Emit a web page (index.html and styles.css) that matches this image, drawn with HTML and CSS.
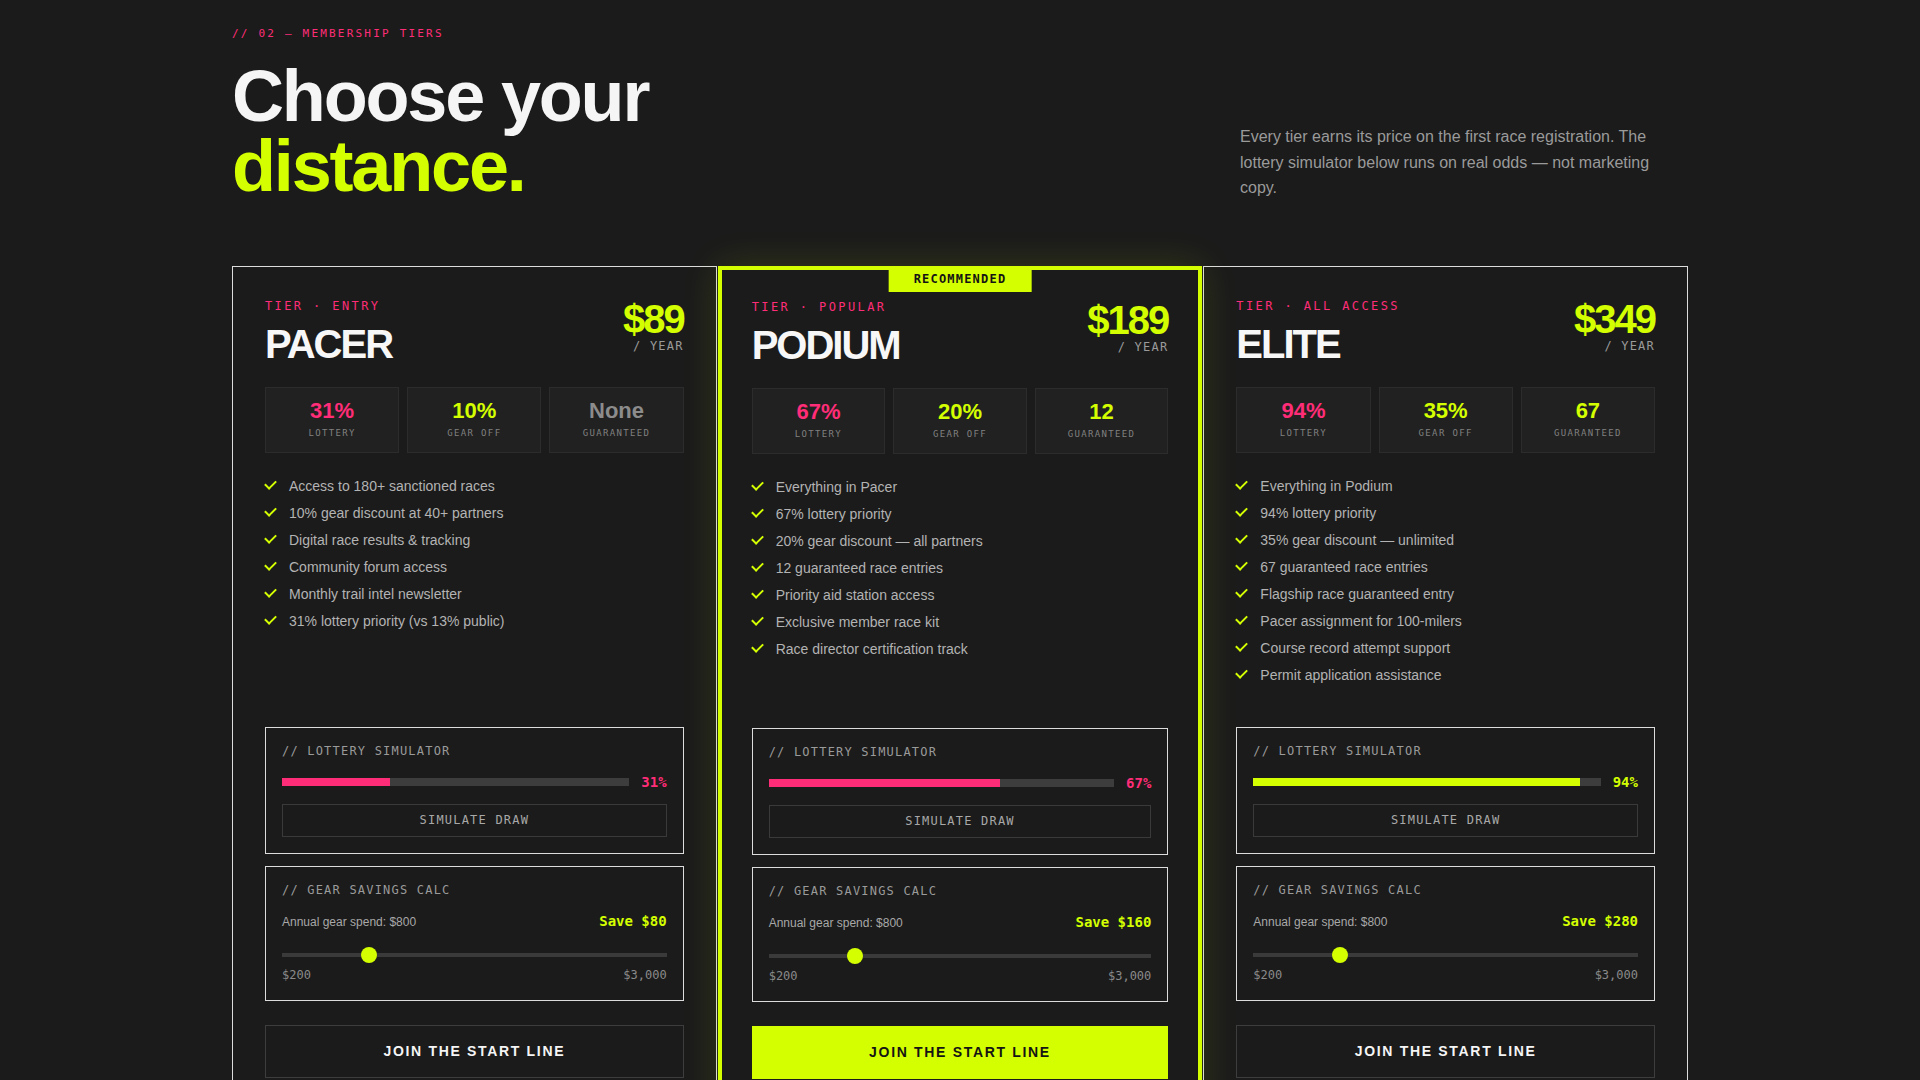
FILE: index.html
```html
<!DOCTYPE html>
<html lang="en">
<head>
    <meta charset="UTF-8">
    <meta name="viewport" content="width=device-width, initial-scale=1.0">
    <title>Membership Tiers</title>
    <link rel="stylesheet" href="styles.css">
</head>
<body>
    <section class="tiers-section">
        <header class="section-head">
            <div>
                <p class="eyebrow">// 02 — MEMBERSHIP TIERS</p>
                <h2 class="section-title">Choose your<br><span class="accent">distance.</span></h2>
            </div>
            <p class="section-lede">Every tier earns its price on the first race registration. The lottery simulator below runs on real odds — not marketing copy.</p>
        </header>

        <div class="tiers">
            <!-- Pacer -->
            <article class="tier">
                <div class="tier-head">
                    <div>
                        <p class="tier-kicker">TIER · ENTRY</p>
                        <h3 class="tier-name">PACER</h3>
                    </div>
                    <div class="price">
                        <span class="price-amount">$89</span>
                        <span class="price-period">/ YEAR</span>
                    </div>
                </div>
                <div class="stats">
                    <div class="stat"><span class="stat-value pink">31%</span><span class="stat-label">LOTTERY</span></div>
                    <div class="stat"><span class="stat-value lime">10%</span><span class="stat-label">GEAR OFF</span></div>
                    <div class="stat"><span class="stat-value muted">None</span><span class="stat-label">GUARANTEED</span></div>
                </div>
                <ul class="features">
                    <li>Access to 180+ sanctioned races</li>
                    <li>10% gear discount at 40+ partners</li>
                    <li>Digital race results &amp; tracking</li>
                    <li>Community forum access</li>
                    <li>Monthly trail intel newsletter</li>
                    <li>31% lottery priority (vs 13% public)</li>
                </ul>
                <div class="widget">
                    <p class="widget-title">// LOTTERY SIMULATOR</p>
                    <div class="meter">
                        <div class="meter-track"><div class="meter-fill" style="width: 31%"></div></div>
                        <span class="meter-value">31%</span>
                    </div>
                    <button class="simulate" type="button">SIMULATE DRAW</button>
                </div>
                <div class="widget">
                    <p class="widget-title">// GEAR SAVINGS CALC</p>
                    <div class="calc-row">
                        <span class="calc-spend">Annual gear spend: $800</span>
                        <span class="calc-save">Save $80</span>
                    </div>
                    <input class="range" type="range" min="200" max="3000" step="50" value="800">
                    <div class="range-labels"><span>$200</span><span>$3,000</span></div>
                </div>
                <button class="join" type="button">JOIN THE START LINE</button>
            </article>

            <!-- Podium -->
            <article class="tier tier--featured">
                <span class="badge">RECOMMENDED</span>
                <div class="tier-head">
                    <div>
                        <p class="tier-kicker">TIER · POPULAR</p>
                        <h3 class="tier-name">PODIUM</h3>
                    </div>
                    <div class="price">
                        <span class="price-amount">$189</span>
                        <span class="price-period">/ YEAR</span>
                    </div>
                </div>
                <div class="stats">
                    <div class="stat"><span class="stat-value pink">67%</span><span class="stat-label">LOTTERY</span></div>
                    <div class="stat"><span class="stat-value lime">20%</span><span class="stat-label">GEAR OFF</span></div>
                    <div class="stat"><span class="stat-value lime">12</span><span class="stat-label">GUARANTEED</span></div>
                </div>
                <ul class="features">
                    <li>Everything in Pacer</li>
                    <li>67% lottery priority</li>
                    <li>20% gear discount — all partners</li>
                    <li>12 guaranteed race entries</li>
                    <li>Priority aid station access</li>
                    <li>Exclusive member race kit</li>
                    <li>Race director certification track</li>
                </ul>
                <div class="widget">
                    <p class="widget-title">// LOTTERY SIMULATOR</p>
                    <div class="meter">
                        <div class="meter-track"><div class="meter-fill" style="width: 67%"></div></div>
                        <span class="meter-value">67%</span>
                    </div>
                    <button class="simulate" type="button">SIMULATE DRAW</button>
                </div>
                <div class="widget">
                    <p class="widget-title">// GEAR SAVINGS CALC</p>
                    <div class="calc-row">
                        <span class="calc-spend">Annual gear spend: $800</span>
                        <span class="calc-save">Save $160</span>
                    </div>
                    <input class="range" type="range" min="200" max="3000" step="50" value="800">
                    <div class="range-labels"><span>$200</span><span>$3,000</span></div>
                </div>
                <button class="join" type="button">JOIN THE START LINE</button>
            </article>

            <!-- Elite -->
            <article class="tier">
                <div class="tier-head">
                    <div>
                        <p class="tier-kicker">TIER · ALL ACCESS</p>
                        <h3 class="tier-name">ELITE</h3>
                    </div>
                    <div class="price">
                        <span class="price-amount">$349</span>
                        <span class="price-period">/ YEAR</span>
                    </div>
                </div>
                <div class="stats">
                    <div class="stat"><span class="stat-value pink">94%</span><span class="stat-label">LOTTERY</span></div>
                    <div class="stat"><span class="stat-value lime">35%</span><span class="stat-label">GEAR OFF</span></div>
                    <div class="stat"><span class="stat-value lime">67</span><span class="stat-label">GUARANTEED</span></div>
                </div>
                <ul class="features">
                    <li>Everything in Podium</li>
                    <li>94% lottery priority</li>
                    <li>35% gear discount — unlimited</li>
                    <li>67 guaranteed race entries</li>
                    <li>Flagship race guaranteed entry</li>
                    <li>Pacer assignment for 100-milers</li>
                    <li>Course record attempt support</li>
                    <li>Permit application assistance</li>
                </ul>
                <div class="widget">
                    <p class="widget-title">// LOTTERY SIMULATOR</p>
                    <div class="meter meter--high">
                        <div class="meter-track"><div class="meter-fill" style="width: 94%"></div></div>
                        <span class="meter-value">94%</span>
                    </div>
                    <button class="simulate" type="button">SIMULATE DRAW</button>
                </div>
                <div class="widget">
                    <p class="widget-title">// GEAR SAVINGS CALC</p>
                    <div class="calc-row">
                        <span class="calc-spend">Annual gear spend: $800</span>
                        <span class="calc-save">Save $280</span>
                    </div>
                    <input class="range" type="range" min="200" max="3000" step="50" value="800">
                    <div class="range-labels"><span>$200</span><span>$3,000</span></div>
                </div>
                <button class="join" type="button">JOIN THE START LINE</button>
            </article>
        </div>
    </section>
</body>
</html>
```

FILE: styles.css
```css
:root {
    --bg: #1b1b1b;
    --lime: #d4ff00;
    --pink: #ff2d78;
    --line: #dcdcdc;
    --mono: "DejaVu Sans Mono", "Liberation Mono", monospace;
}
* {
    box-sizing: border-box;
}
body {
    margin: 0;
    background: var(--bg);
    color: #f5f5f5;
    font-family: "Liberation Sans", Arial, sans-serif;
}

/* header */
.tiers-section {
    max-width: 1456px;
    margin: 0 auto;
    padding: 25px 0 64px;
}
.section-head {
    display: flex;
    justify-content: space-between;
    align-items: flex-end;
    margin-bottom: 64px;
}
.eyebrow {
    margin: 0 0 18px;
    font-family: var(--mono);
    font-size: 11px;
    line-height: 1.6;
    letter-spacing: 0.2em;
    color: var(--pink);
}
.section-title {
    margin: 0;
    font-size: 72px;
    line-height: 0.98;
    font-weight: 700;
    letter-spacing: -0.03em;
    color: #f5f5f5;
}
.section-title .accent {
    color: var(--lime);
}
.section-lede {
    margin: 0 0 1px;
    max-width: 448px;
    font-size: 16px;
    line-height: 1.6;
    color: #9a9a9a;
}

/* cards */
.tiers {
    display: grid;
    grid-template-columns: repeat(3, 1fr);
    gap: 1px;
}
.tier {
    position: relative;
    display: flex;
    flex-direction: column;
    padding: 32px;
    border: 1px solid var(--line);
    background: var(--bg);
}
.tier--featured {
    z-index: 1;
    border: 2px solid var(--lime);
    box-shadow: inset 0 0 0 2px var(--lime), 0 0 36px rgba(212, 255, 0, 0.14);
}
.badge {
    position: absolute;
    top: -2px;
    left: 50%;
    transform: translateX(-50%);
    padding: 6px 25px;
    background: var(--lime);
    color: #141414;
    font-family: var(--mono);
    font-size: 12px;
    line-height: 14px;
    font-weight: 700;
    letter-spacing: 0.1em;
}
.tier-head {
    display: flex;
    justify-content: space-between;
    align-items: flex-start;
}
.tier-kicker {
    margin: 0 0 11px;
    font-family: var(--mono);
    font-size: 12px;
    line-height: 14px;
    letter-spacing: 0.2em;
    color: var(--pink);
}
.tier-name {
    margin: 0;
    font-size: 40px;
    line-height: 1;
    font-weight: 700;
    letter-spacing: -0.05em;
    color: #f7f7f7;
}
.price {
    text-align: right;
}
.price-amount {
    display: block;
    font-size: 40px;
    line-height: 1;
    font-weight: 700;
    letter-spacing: -0.05em;
    color: var(--lime);
}
.price-period {
    display: block;
    font-family: var(--mono);
    font-size: 12px;
    line-height: 1.2;
    letter-spacing: 0.1em;
    color: #9a9a9a;
}

/* stat tiles */
.stats {
    display: grid;
    grid-template-columns: repeat(3, 1fr);
    gap: 8px;
    margin-top: 23px;
}
.stat {
    padding: 11px 6px 13px;
    text-align: center;
    background: #212121;
    border: 1px solid #2c2c2c;
}
.stat-value {
    display: block;
    font-size: 22px;
    line-height: 1.1;
    font-weight: 700;
}
.stat-label {
    display: block;
    margin-top: 5px;
    font-family: var(--mono);
    font-size: 9px;
    line-height: 1.2;
    letter-spacing: 0.15em;
    color: #808080;
}
.pink { color: var(--pink); }
.lime { color: var(--lime); }
.muted { color: #8c8c8c; }

/* perks: room for eight lines so the boxes below line up */
.features {
    display: flex;
    flex-direction: column;
    gap: 5px;
    min-height: 211px;
    margin: 22px 0 41px;
    padding: 0;
    list-style: none;
}
.features li {
    display: flex;
    align-items: center;
    gap: 13px;
    font-size: 14px;
    line-height: 22px;
    color: #b3b3b3;
}
.features li::before {
    content: "";
    flex: none;
    width: 9px;
    height: 5px;
    border-left: 2px solid var(--lime);
    border-bottom: 2px solid var(--lime);
    transform: translateY(-2px) rotate(-45deg);
}

/* simulator + calculator boxes */
.widget {
    padding: 16px;
    border: 1px solid var(--line);
}
.widget + .widget {
    margin-top: 12px;
}
.widget-title {
    margin: 0 0 15px;
    font-family: var(--mono);
    font-size: 12px;
    line-height: 15px;
    letter-spacing: 0.1em;
    color: #9a9a9a;
}
.meter {
    display: flex;
    align-items: center;
    gap: 12px;
}
.meter-track {
    flex: 1;
    height: 8px;
    background: #3d3d3d;
}
.meter-fill {
    height: 100%;
    background: var(--pink);
}
.meter-value {
    font-family: var(--mono);
    font-size: 14px;
    line-height: 16px;
    font-weight: 700;
    color: var(--pink);
}
.meter--high .meter-fill {
    background: var(--lime);
}
.meter--high .meter-value {
    color: var(--lime);
}
.simulate {
    display: block;
    width: 100%;
    margin-top: 14px;
    padding: 9px 0;
    background: transparent;
    border: 1px solid #3a3a3a;
    font-family: var(--mono);
    font-size: 12px;
    line-height: 13px;
    letter-spacing: 0.1em;
    color: #a8a8a8;
    cursor: pointer;
}
.widget-title + .calc-row {
    margin-top: -1px;
}
.calc-row {
    display: flex;
    justify-content: space-between;
    align-items: baseline;
    line-height: 18px;
}
.calc-spend {
    font-size: 12px;
    color: #a8a8a8;
}
.calc-save {
    font-family: var(--mono);
    font-size: 14px;
    font-weight: 700;
    color: var(--lime);
}
.range {
    -webkit-appearance: none;
    appearance: none;
    display: block;
    width: 100%;
    height: 16px;
    margin: 16px 0 0;
    background: transparent;
}
.range::-webkit-slider-runnable-track {
    height: 4px;
    background: #3a3a3a;
}
.range::-webkit-slider-thumb {
    -webkit-appearance: none;
    width: 16px;
    height: 16px;
    margin-top: -6px;
    border: none;
    border-radius: 50%;
    background: var(--lime);
}
.range-labels {
    display: flex;
    justify-content: space-between;
    margin-top: 3px;
    font-family: var(--mono);
    font-size: 12px;
    line-height: 18px;
    color: #8a8a8a;
}
.join {
    display: block;
    width: 100%;
    margin-top: 24px;
    padding: 17px 0;
    background: transparent;
    border: 1px solid #3d3d3d;
    font-family: "Liberation Sans", Arial, sans-serif;
    font-size: 14px;
    line-height: 17px;
    font-weight: 700;
    letter-spacing: 0.12em;
    color: #f5f5f5;
    cursor: pointer;
}
.tier--featured .join {
    background: var(--lime);
    border-color: var(--lime);
    color: #141414;
}
```
